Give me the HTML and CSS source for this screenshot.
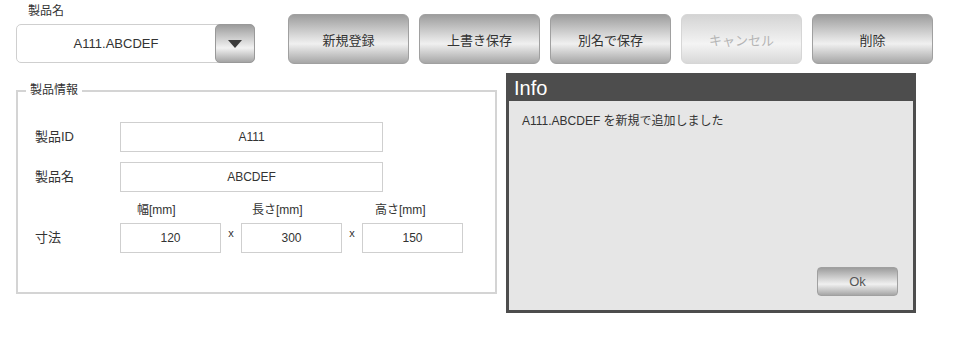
FILE: index.html
```html
<!DOCTYPE html>
<html lang="ja">
<head>
<meta charset="utf-8">
<title>製品</title>
<link rel="stylesheet" href="styles.css">
</head>
<body>
<div class="top">
  <div class="pick">
    <div class="pick-label">製品名</div>
    <div class="select">
      <div class="select-value">A111.ABCDEF</div>
      <div class="select-btn"><svg width="14" height="8" viewBox="0 0 14 8"><path d="M0 0H14L7 8Z" fill="#3a3a3a"/></svg></div>
    </div>
  </div>
  <div class="actions">
    <button class="btn">新規登録</button>
    <button class="btn">上書き保存</button>
    <button class="btn">別名で保存</button>
    <button class="btn disabled">キャンセル</button>
    <button class="btn">削除</button>
  </div>
</div>
<div class="main">
  <fieldset class="info-set">
    <legend>製品情報</legend>
    <div class="form">
      <div class="row">
        <span class="lbl">製品ID</span>
        <div class="field wide">A111</div>
      </div>
      <div class="row">
        <span class="lbl">製品名</span>
        <div class="field wide">ABCDEF</div>
      </div>
      <div class="dims-head">
        <span class="dh dh1">幅[mm]</span>
        <span class="dh dh2">長さ[mm]</span>
        <span class="dh">高さ[mm]</span>
      </div>
      <div class="row">
        <span class="lbl">寸法</span>
        <div class="field small">120</div>
        <span class="times">x</span>
        <div class="field small">300</div>
        <span class="times">x</span>
        <div class="field small">150</div>
      </div>
    </div>
  </fieldset>
  <div class="dialog">
    <div class="dialog-head">Info</div>
    <div class="dialog-body">
      <p class="msg">A111.ABCDEF を新規で追加しました</p>
      <div class="dialog-foot"><button class="btn ok">Ok</button></div>
    </div>
  </div>
</div>
</body>
</html>
```
FILE: styles.css
```css
* { box-sizing: border-box; }
body {
  margin: 0;
  background: #fff;
  font-family: "Liberation Sans", "Noto Sans CJK JP", sans-serif;
  font-size: 12px;
  color: #333;
}
.top {
  display: flex;
  align-items: flex-start;
  padding-left: 16px;
}
.pick { width: 239px; flex: none; }
.pick-label {
  padding-left: 12px;
  height: 24px;
  line-height: 22px;
}
.select {
  display: flex;
  height: 39px;
  border: 1px solid #cfcfcf;
  border-radius: 5px;
  background: #fff;
}
.select-value {
  flex: 1;
  text-align: center;
  line-height: 37px;
  font-size: 13px;
}
.select-btn {
  width: 40px;
  margin: -1px -1px -1px 0;
  border: 1px solid #999;
  border-radius: 5px;
  background: linear-gradient(#9c9c9c, #e8e8e8 55%, #f2f2f2 62%, #a4a4a4);
  display: flex;
  align-items: center;
  justify-content: center;
}
.actions {
  display: flex;
  gap: 10px;
  margin-left: 33px;
  margin-top: 14px;
}
.btn {
  width: 121px;
  height: 50px;
  border: 1px solid #a0a0a0;
  border-radius: 6px;
  background: linear-gradient(#9d9d9d, #dcdcdc 45%, #f0f0f0 60%, #a6a6a6);
  font-family: inherit;
  font-size: 13px;
  color: #333;
  padding: 0;
}
.btn.disabled {
  border-color: #d6d6d6;
  background: linear-gradient(#d4d4d4, #eeeeee 50%, #f4f4f4 60%, #d8d8d8);
  color: #b5b5b5;
}
.main {
  display: flex;
  align-items: flex-start;
  margin-top: 9px;
  padding-left: 16px;
  gap: 9px;
}
.info-set {
  width: 481px;
  min-width: 0;
  height: 212px;
  margin: 9px 0 0;
  padding: 0 0 0 17px;
  border: 2px solid #d4d4d4;
  flex: none;
}
.info-set legend {
  margin-left: -9px;
  padding: 0 4px;
  line-height: 17px;
}
.form { padding-top: 23px; }
.row {
  display: flex;
  align-items: center;
  height: 30px;
  margin-bottom: 10px;
}
.lbl { width: 85px; font-size: 13px; margin-bottom: 4px; }
.field {
  height: 30px;
  border: 1px solid #cfcfcf;
  text-align: center;
  line-height: 28px;
}
.wide { width: 263px; }
.small { width: 101px; }
.times {
  width: 20px;
  text-align: center;
  margin-top: -10px;
  font-size: 11px;
}
.dims-head {
  display: flex;
  padding-left: 102px;
  margin: 0 0 5px;
  height: 16px;
  line-height: 16px;
  font-size: 12px;
}
.dh1 { width: 115px; }
.dh2 { width: 123px; }
.dialog {
  width: 410px;
  height: 240px;
  border: 3px solid #4d4d4d;
  border-top: 0;
  display: flex;
  flex-direction: column;
  flex: none;
}
.dialog-head {
  height: 28px;
  background: #4d4d4d;
  color: #fff;
  font-size: 20px;
  line-height: 30px;
  padding-left: 5px;
}
.dialog-body {
  flex: 1;
  background: #e6e6e6;
  display: flex;
  flex-direction: column;
  padding: 10px 15px 14px 13px;
}
.msg { margin: 0; flex: 1; font-size: 12px; }
.dialog-foot { display: flex; justify-content: flex-end; }
.btn.ok {
  width: 81px;
  height: 29px;
  border-radius: 4px;
  color: #555;
}
```
